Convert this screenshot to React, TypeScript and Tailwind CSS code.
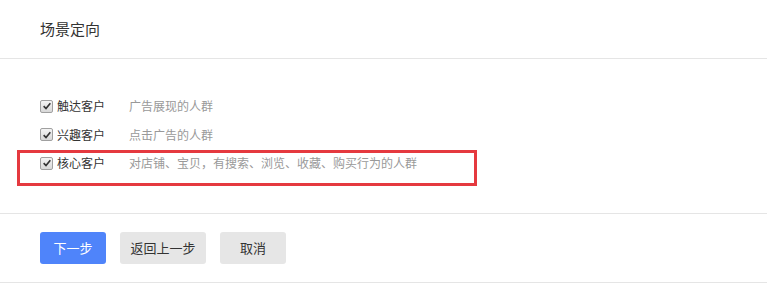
import React from 'react';

const rows = [
  { label: '触达客户', desc: '广告展现的人群' },
  { label: '兴趣客户', desc: '点击广告的人群' },
  { label: '核心客户', desc: '对店铺、宝贝，有搜索、浏览、收藏、购买行为的人群' },
];

const CheckIcon = () => (
  <span className="w-[13px] h-[13px] rounded-[2px] border border-[#a0a0a0] bg-gradient-to-b from-[#f4f4f4] to-[#d8d8d8] flex items-center justify-center">
    <svg viewBox="0 0 12 12" className="w-[10px] h-[10px]">
      <path d="M2 6.2 L4.8 9 L10 2.8" fill="none" stroke="#333" strokeWidth="2" />
    </svg>
  </span>
);

export default function App() {
  return (
    <div
      className="w-[767px] h-[283px] bg-white relative overflow-hidden"
      style={{ fontFamily: '"Microsoft YaHei", "Noto Sans CJK SC", sans-serif' }}
    >
      {/* Header */}
      <div className="h-[59px] border-b border-[#e5e5e5] pl-[40px] flex items-center">
        <span className="text-[15px] text-[#333]">场景定向</span>
      </div>

      {/* Body */}
      <div className="h-[155px] border-b border-[#e5e5e5] pt-[33px] pl-[40px] flex flex-col">
        {rows.map((r) => (
          <div key={r.label} className="h-[28.5px] flex items-center text-[12px]">
            <CheckIcon />
            <span className="ml-[4px] w-[72px] text-[#333]">{r.label}</span>
            <span className="text-[#999]">{r.desc}</span>
          </div>
        ))}
      </div>

      {/* Footer */}
      <div className="h-[69px] border-b border-[#e5e5e5] pl-[40px] flex items-center gap-[14px]">
        <button className="w-[66px] h-[32px] rounded-[3px] bg-[#4f84fa] text-white text-[13px]">下一步</button>
        <button className="w-[86px] h-[32px] rounded-[3px] bg-[#e6e6e6] text-[#333] text-[13px]">返回上一步</button>
        <button className="w-[66px] h-[32px] rounded-[3px] bg-[#e6e6e6] text-[#333] text-[13px]">取消</button>
      </div>

      {/* annotation box */}
      <div className="absolute left-[17px] top-[150px] w-[460px] h-[36px] border-[3px] border-[#e5393f]" />
    </div>
  );
}
